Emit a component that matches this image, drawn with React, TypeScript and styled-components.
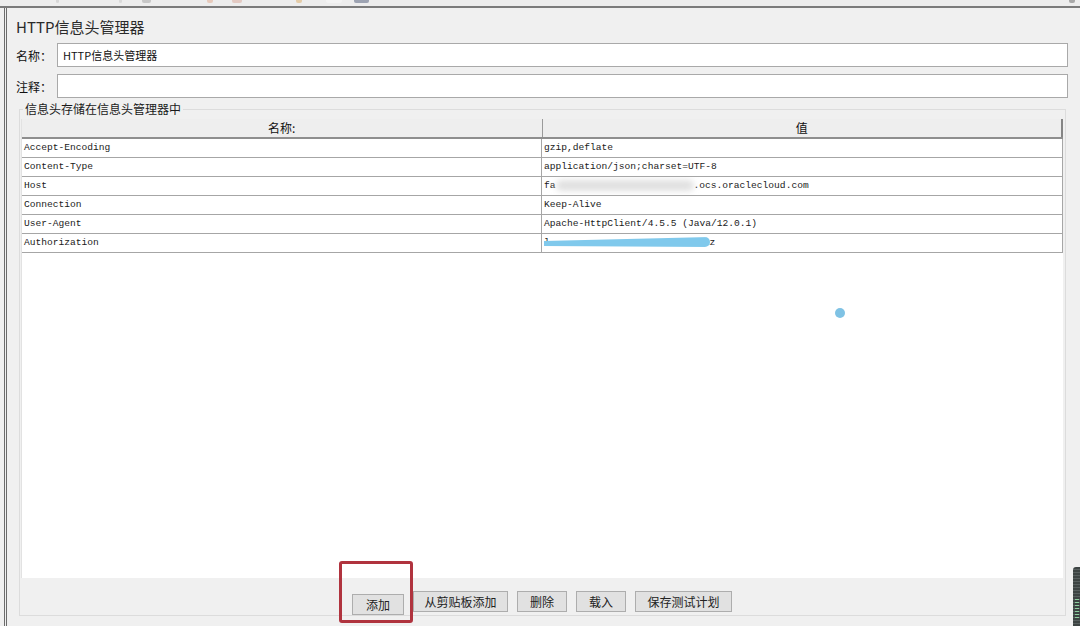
import styled, { createGlobalStyle } from "styled-components"

const Global = createGlobalStyle`
  html, body {
    margin: 0;
    padding: 0;
    background: #f0f0f0;
  }
  body {
    font-family: "Noto Sans CJK SC", "Liberation Sans", sans-serif;
    color: #1e1e1e;
  }
`

const Window = styled.div`
  position: relative;
  width: 1080px;
  height: 626px;
  overflow: hidden;
  background: #f0f0f0;
  display: flex;
  flex-direction: column;
`

const Toolbar = styled.div`
  height: 6px;
  background: #ededed;
  border-bottom: 2px solid #7b7b7b;
  display: flex;
  align-items: flex-start;
  overflow: hidden;
`

const ToolBit = styled.span<{ $gap: number; $w: number; $c: string }>`
  margin-left: ${(p) => p.$gap}px;
  width: ${(p) => p.$w}px;
  height: 3px;
  background: ${(p) => p.$c};
  border-radius: 0 0 2px 2px;
  opacity: 0.45;
`

const Frame = styled.div`
  flex: 1;
  min-height: 0;
  margin-left: 4px;
  border-left: 3px double #6c6c6c;
  padding: 0 12px 0 9px;
  display: flex;
  flex-direction: column;
`

const Title = styled.h1`
  margin: 4px 0 0;
  height: 30px;
  line-height: 30px;
  font-size: 15px;
  font-weight: 400;
  color: #2a2a2a;
`

const FieldRow = styled.div<{ $top: number }>`
  margin-top: ${(p) => p.$top}px;
  height: 24px;
  display: flex;
  align-items: center;
`

const Label = styled.span`
  width: 41px;
  font-size: 12px;
  color: #111;
`

const Input = styled.input`
  flex: 1;
  height: 24px;
  box-sizing: border-box;
  border: 1px solid #a9a9a9;
  background: #fff;
  padding: 0 5px;
  font-family: "Noto Sans CJK SC", "Liberation Sans", sans-serif;
  font-size: 11px;
  color: #111;
  outline: none;
`

const Group = styled.fieldset`
  flex: 1;
  min-height: 0;
  margin: 4px 2px 10px 3px;
  padding: 3px 2px 0 1px;
  border: 1px solid #dcdcdc;
  display: flex;
  flex-direction: column;
`

const Legend = styled.legend`
  margin-left: 2px;
  padding: 0 2px;
  font-size: 12px;
  line-height: 14px;
  color: #1a1a1a;
`

const Table = styled.div`
  position: relative;
  flex: 1;
  min-height: 0;
  background: #fff;
  border-left: 1px solid #e2e2e2;
  display: flex;
  flex-direction: column;
`

const HeadRow = styled.div`
  display: grid;
  grid-template-columns: 1fr 1fr;
  height: 18px;
  background: #eeeeee;
  border-bottom: 2px solid #8e8e8e;
`

const HeadCell = styled.div<{ $last?: boolean }>`
  text-align: center;
  font-size: 12px;
  line-height: 18px;
  color: #111;
  border-right: ${(p) => (p.$last ? "2px solid #858585" : "1px solid #9a9a9a")};
`

const Row = styled.div`
  display: grid;
  grid-template-columns: 1fr 1fr;
  height: 19px;
  box-sizing: border-box;
  border-bottom: 1px solid #a6a6a6;
  border-right: 1px solid #a6a6a6;
`

const Cell = styled.div<{ $first?: boolean }>`
  position: relative;
  padding-left: 2px;
  font-family: "Liberation Mono", "Noto Sans CJK SC", monospace;
  font-size: 9.6px;
  line-height: 18px;
  color: #1a1a1a;
  white-space: nowrap;
  overflow: hidden;
  border-right: ${(p) => (p.$first ? "1px solid #a6a6a6" : "none")};
`

const Smudge = styled.span`
  display: inline-block;
  width: 138px;
  height: 11px;
  vertical-align: middle;
  background: #e0e0e0;
  border-radius: 6px;
  filter: blur(3px);
`

const Hidden = styled.span`
  display: inline-block;
  width: 154px;
`

const Scribble = styled.span`
  position: absolute;
  left: 2px;
  top: 3px;
  width: 166px;
  height: 10px;
  background: #80c9ec;
  border-radius: 3px 8px 8px 3px;
  clip-path: polygon(0 40%, 100% 0, 100% 100%, 0 90%);
  filter: blur(0.6px);
`

const Dot = styled.span`
  position: absolute;
  left: 813px;
  top: 189px;
  width: 10px;
  height: 10px;
  border-radius: 50%;
  background: #7fc2e4;
  filter: blur(0.5px);
`

const ButtonBar = styled.div`
  height: 37px;
  box-sizing: border-box;
  padding-top: 13px;
  display: flex;
  justify-content: center;
  gap: 9px;
  background: #f0f0f0;
`

const ButtonWrap = styled.div`
  position: relative;
`

const Button = styled.button<{ $w: number }>`
  width: ${(p) => p.$w}px;
  height: 21px;
  padding: 0;
  border: 1px solid #adadad;
  background: #e1e1e1;
  font-family: "Noto Sans CJK SC", "Liberation Sans", sans-serif;
  font-size: 12px;
  color: #222;
`

const Highlight = styled.span`
  position: absolute;
  left: -13px;
  right: -9px;
  top: -30px;
  bottom: -8px;
  border: 3px solid #b0333e;
  border-radius: 3px;
  pointer-events: none;
`

const SideGauge = styled.div`
  position: absolute;
  right: 0;
  top: 567px;
  width: 7px;
  height: 59px;
  border-radius: 3px 0 0 0;
  background: repeating-linear-gradient(180deg, #3d4443 0 2px, #58605f 2px 3px);
  &::after {
    content: "";
    position: absolute;
    left: 2px;
    right: 1px;
    top: 32px;
    bottom: 6px;
    background: repeating-linear-gradient(180deg, #8fd0a0 0 1px, #3d4443 1px 3px);
  }
`

const headers: [string, string][] = [
  ["Accept-Encoding", "gzip,deflate"],
  ["Content-Type", "application/json;charset=UTF-8"],
  ["Host", "host"],
  ["Connection", "Keep-Alive"],
  ["User-Agent", "Apache-HttpClient/4.5.5 (Java/12.0.1)"],
  ["Authorization", "auth"],
]

function Value({ v }: { v: string }) {
  if (v === "host") {
    return (
      <>
        fa<Smudge />.ocs.oraclecloud.com
      </>
    )
  }
  if (v === "auth") {
    return (
      <>
        l<Hidden />1z
        <Scribble />
      </>
    )
  }
  return <>{v}</>
}

export default function App() {
  return (
    <Window>
      <Global />
      <Toolbar>
        <ToolBit $gap={56} $w={3} $c="#bdbdbd" />
        <ToolBit $gap={60} $w={3} $c="#c4c4c4" />
        <ToolBit $gap={20} $w={9} $c="#9a9a9a" />
        <ToolBit $gap={56} $w={6} $c="#e0a080" />
        <ToolBit $gap={19} $w={10} $c="#d8a090" />
        <ToolBit $gap={54} $w={6} $c="#d9a455" />
        <ToolBit $gap={24} $w={16} $c="#fafafa" />
        <ToolBit $gap={12} $w={15} $c="#3c4a6a" />
        <ToolBit $gap={700} $w={6} $c="#555" />
      </Toolbar>
      <Frame>
        <Title>HTTP信息头管理器</Title>
        <FieldRow $top={1}>
          <Label>名称：</Label>
          <Input defaultValue="HTTP信息头管理器" readOnly />
        </FieldRow>
        <FieldRow $top={7}>
          <Label>注释：</Label>
          <Input defaultValue="" readOnly />
        </FieldRow>
        <Group>
          <Legend>信息头存储在信息头管理器中</Legend>
          <Table>
            <HeadRow>
              <HeadCell>名称:</HeadCell>
              <HeadCell $last>值</HeadCell>
            </HeadRow>
            {headers.map(([name, value]) => (
              <Row key={name}>
                <Cell $first>{name}</Cell>
                <Cell>
                  <Value v={value} />
                </Cell>
              </Row>
            ))}
            <Dot />
          </Table>
          <ButtonBar>
            <ButtonWrap>
              <Button $w={52}>添加</Button>
              <Highlight />
            </ButtonWrap>
            <Button $w={95}>从剪贴板添加</Button>
            <Button $w={50}>删除</Button>
            <Button $w={50}>载入</Button>
            <Button $w={97}>保存测试计划</Button>
          </ButtonBar>
        </Group>
      </Frame>
      <SideGauge />
    </Window>
  )
}
